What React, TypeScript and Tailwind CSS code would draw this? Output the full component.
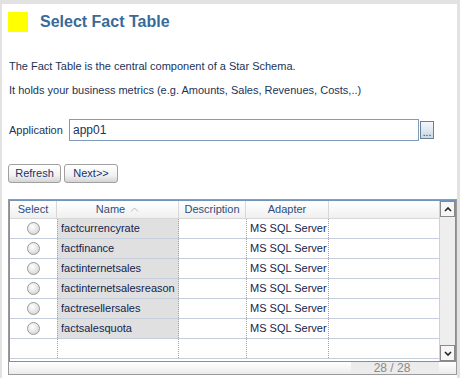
import React from "react";

const rows = [
  "factcurrencyrate",
  "factfinance",
  "factinternetsales",
  "factinternetsalesreason",
  "factresellersales",
  "factsalesquota",
];

function Radio() {
  return (
    <div className="w-[13px] h-[13px] rounded-full border border-[#9a9a9a] bg-[radial-gradient(circle_at_40%_35%,#ffffff_0%,#e4e4e4_55%,#c8c8c8_100%)]" />
  );
}

export default function App() {
  const font = { fontFamily: "'Liberation Sans', Arial, sans-serif" };
  return (
    <div className="w-[460px] h-[378px] bg-[#e2e2e2] pt-[4px] pl-[2px] pr-[3px] overflow-hidden" style={font}>
      <div className="bg-white h-full pl-[6px] pr-0 text-[11px] text-[#1b3358]">
        <div className="flex items-center h-[34px] pt-[2px]">
          <div className="w-[20px] h-[20px] bg-[#ffff00]" />
          <div className="ml-[12px] text-[16px] font-bold text-[#3a6a99]">
            Select Fact Table
          </div>
        </div>
        <div className="mt-[21px] leading-[14px] pl-[1px]">The Fact Table is the central component of a Star Schema.</div>
        <div className="mt-[10px] leading-[14px] pl-[1px]">It holds your business metrics (e.g. Amounts, Sales, Revenues, Costs,..)</div>
        <div className="flex items-center mt-[22px] h-[22px]">
          <div className="w-[61px] pl-[1px]">Application</div>
          <div className="w-[350px] h-[22px] border border-[#7f9db9] flex items-center pl-[3px] text-[12px]">app01</div>
          <div className="ml-[1px] w-[14px] h-[18px] border border-[#6d7f95] bg-[linear-gradient(#f4f7fb,#c9d7e6)] flex items-end justify-center leading-[10px] text-[10px] text-[#1b2b50]">...</div>
        </div>
        <div className="flex mt-[23px] gap-[3px]">
          <div className="h-[19px] w-[53px] rounded-[3px] border border-[#a0a0a0] bg-[linear-gradient(#ffffff_0%,#f2f2f2_60%,#d4d4d4_100%)] flex items-center justify-center text-[11px] text-[#14336b]">Refresh</div>
          <div className="h-[19px] w-[54px] rounded-[3px] border border-[#a0a0a0] bg-[linear-gradient(#ffffff_0%,#f2f2f2_60%,#d4d4d4_100%)] flex items-center justify-center text-[11px] text-[#14336b]">Next&gt;&gt;</div>
        </div>
        <div className="mt-[16px] w-[449px] h-[176px] border border-[#9a9a9a] p-0">
          <div className="border border-[#6f93bd] h-[162px] flex">
            <div className="flex-1 flex flex-col">
              <div className="flex h-[18px] bg-[linear-gradient(#ffffff,#f0f0f0)] border-b border-[#d8d8d8] text-[#2e4e7a] text-[11px]">
                <div className="w-[47px] flex items-center justify-center border-r border-[#d8d8d8]">Select</div>
                <div className="w-[122px] flex items-center justify-center border-r border-[#d8d8d8]">
                  Name
                  <svg className="ml-[5px]" width="9" height="5" viewBox="0 0 9 5"><path d="M1 4.5 L4.5 1 L8 4.5" stroke="#b4bcc8" strokeWidth="1" fill="none" /></svg>
                </div>
                <div className="w-[67px] flex items-center justify-center border-r border-[#d8d8d8]">Description</div>
                <div className="w-[83px] flex items-center justify-center border-r border-[#d8d8d8]">Adapter</div>
                <div className="flex-1" />
              </div>
              {rows.concat([""]).map((r, i) => (
                <div key={i} className="flex h-[20px] border-b border-[#c6cfdb] text-[11px] text-[#14234e] whitespace-nowrap">
                  <div className="w-[47px] flex items-center justify-center">{r ? <Radio /> : null}</div>
                  <div className={"w-[122px] flex items-center pl-[3px] border-l border-r border-dotted border-[#8fa6c8] " + (r ? "bg-[#e0e0e0]" : "")}>{r}</div>
                  <div className="w-[67px]" />
                  <div className="w-[83px] flex items-center pl-[3px] border-l border-r border-dotted border-[#8fa6c8]">{r ? "MS SQL Server" : ""}</div>
                  <div className="flex-1" />
                </div>
              ))}
            </div>
            <div className="w-[16px] flex flex-col bg-[#eeeeee] border-l border-[#d0d0d0]">
              <div className="h-[16px] border border-[#8a8a8a] bg-[#f6f6f6] flex items-center justify-center">
                <svg width="8" height="5" viewBox="0 0 8 5"><path d="M1 4 L4 1 L7 4" stroke="#222" strokeWidth="1.6" fill="none" /></svg>
              </div>
              <div className="flex-1" />
              <div className="h-[16px] border border-[#8a8a8a] bg-[#f6f6f6] flex items-center justify-center">
                <svg width="8" height="5" viewBox="0 0 8 5"><path d="M1 1 L4 4 L7 1" stroke="#222" strokeWidth="1.6" fill="none" /></svg>
              </div>
            </div>
          </div>
          <div className="h-[12px] flex bg-[linear-gradient(#ffffff,#ececec)]">
            <div className="flex-1" />
            <div className="w-[88px] bg-[#ececec] text-[#8a8a8a] text-[12px] leading-[12px] flex items-end justify-center pr-[6px]">28 / 28</div>
            <div className="w-[17px]" />
          </div>
        </div>
      </div>
    </div>
  );
}
